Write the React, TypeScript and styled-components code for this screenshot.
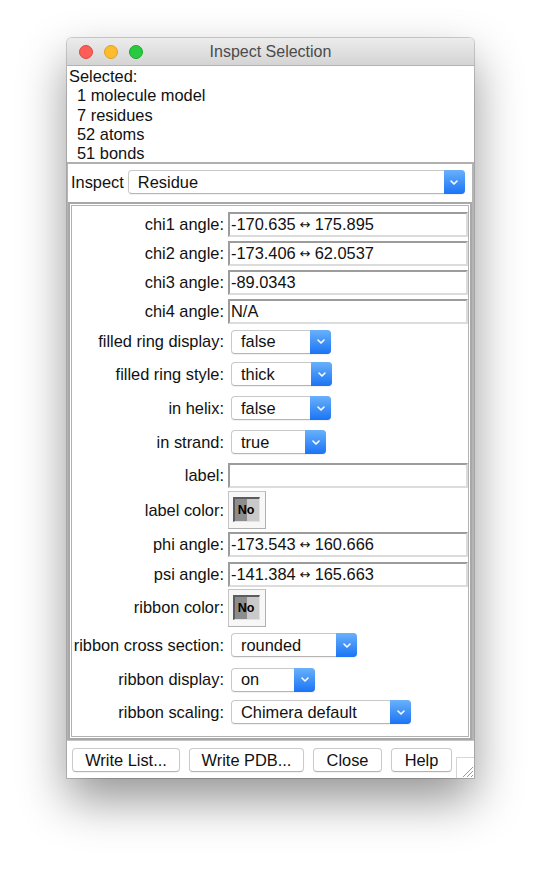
import React from "react";
import styled, { createGlobalStyle } from "styled-components";

const GlobalStyle = createGlobalStyle`
  html, body {
    margin: 0;
    padding: 0;
    background: #ffffff;
  }
  body {
    font-family: "Liberation Sans", Helvetica, Arial, sans-serif;
    font-size: 16.4px;
    color: #111;
  }
`;

const Page = styled.div`
  width: 542px;
  height: 876px;
  padding: 38px 0 0 67px;
  box-sizing: border-box;
`;

const Window = styled.div`
  width: 407px;
  height: 740px;
  display: flex;
  flex-direction: column;
  background: #fff;
  border-radius: 5px 5px 0 0;
  box-shadow: 0 0 0 1px rgba(0, 0, 0, 0.18), 0 22px 48px rgba(0, 0, 0, 0.42);
  overflow: hidden;
`;

const TitleBar = styled.div`
  height: 27px;
  flex: none;
  display: grid;
  grid-template-columns: 1fr auto 1fr;
  align-items: center;
  background: linear-gradient(#ececec, #d4d4d4);
  border-bottom: 1px solid #b3b3b3;
`;

const Lights = styled.div`
  display: flex;
  gap: 11px;
  padding-left: 12px;
`;

const Light = styled.span<{ fill: string; edge: string }>`
  width: 12px;
  height: 12px;
  border-radius: 50%;
  background: ${(p) => p.fill};
  border: 0.5px solid ${(p) => p.edge};
`;

const Title = styled.div`
  color: #4b4b4b;
  font-size: 16px;
`;

const Summary = styled.div`
  height: 96px;
  flex: none;
  padding: 1px 2px 0;
  line-height: 19.3px;
  box-sizing: border-box;
`;

const SummaryLine = styled.div<{ indent?: boolean }>`
  padding-left: ${(p) => (p.indent ? "8px" : "0")};
  white-space: pre;
`;

const LowerFrame = styled.div`
  flex: none;
  border-top: 2px solid #b0b0b0;
  border-left: 1px solid #b4b4b4;
  border-right: 2px solid #b4b4b4;
`;

const InspectRow = styled.div`
  height: 36px;
  display: flex;
  align-items: center;
  gap: 4px;
  padding: 0 3px 0 3px;
`;

const Panel = styled.div`
  margin-top: 2px;
  border: 2px solid #a8a8a8;
  box-shadow: inset 0 0 0 1px #fff, inset 0 0 0 2px #b2b2b2;
  padding: 6px 2px 9px 2px;
`;

const Grid = styled.div`
  display: grid;
  grid-template-columns: 152px 1fr;
  column-gap: 4px;
`;

const Label = styled.div<{ h: number }>`
  height: ${(p) => p.h}px;
  display: flex;
  align-items: center;
  justify-content: flex-end;
  white-space: nowrap;
`;

const Cell = styled.div<{ h: number }>`
  height: ${(p) => p.h}px;
  display: flex;
  align-items: center;
`;

const Entry = styled.div`
  width: 100%;
  height: 25px;
  box-sizing: border-box;
  border-top: 2px solid #9c9c9c;
  border-left: 2px solid #9c9c9c;
  border-right: 2px solid #dcdcdc;
  border-bottom: 2px solid #dcdcdc;
  padding-left: 1px;
  display: flex;
  align-items: center;
  white-space: pre;
  background: #fff;
`;

const Arrow = styled.span`
  font-family: "DejaVu Sans", sans-serif;
  font-size: 13px;
  padding: 0 4px;
`;

const Popup = styled.div<{ w: number; inset?: number }>`
  width: ${(p) => p.w}px;
  height: 24px;
  margin-left: ${(p) => p.inset ?? 3}px;
  box-sizing: border-box;
  display: flex;
  align-items: stretch;
  border: 1px solid #c9c9c9;
  border-bottom-color: #b5b5b5;
  border-radius: 4px;
  background: #fff;
  box-shadow: 0 1px 1px rgba(0, 0, 0, 0.06);
`;

const PopupText = styled.span`
  flex: 1;
  display: flex;
  align-items: center;
  padding-left: 9px;
  white-space: nowrap;
`;

const PopupArrow = styled.span`
  width: 21px;
  margin: -1px -1px -1px 0;
  border-radius: 0 4px 4px 0;
  background: linear-gradient(#69b1fb, #1a74f5);
  display: flex;
  align-items: center;
  justify-content: center;
`;

const ColorWell = styled.div`
  width: 38px;
  height: 38px;
  box-sizing: border-box;
  border: 1px solid #c4c4c4;
  border-right-color: #b0b0b0;
  border-bottom-color: #b0b0b0;
  background: #f7f7f7;
  padding: 5px 5px 6px 4px;
  display: flex;
`;

const Swatch = styled.div`
  flex: 1;
  box-sizing: border-box;
  border-top: 2px solid #5c5c5c;
  border-left: 2px solid #5c5c5c;
  border-right: 1px solid #e2e2e2;
  border-bottom: 1px solid #e2e2e2;
  background: linear-gradient(90deg, #8d8d8d 0 50%, #c9c9c9 50% 100%);
  display: flex;
  align-items: center;
  justify-content: center;
  font-size: 12.5px;
  font-weight: bold;
  color: #000;
  padding-right: 2px;
`;

const ButtonBar = styled.div`
  flex: 1;
  display: flex;
  justify-content: space-between;
  padding-left: 5px;
  border-top: 1px solid #c4c4c4;
  background: #fff;
`;

const Buttons = styled.div`
  display: flex;
  align-items: flex-start;
  gap: 9px;
  padding-top: 7px;
`;

const Button = styled.div<{ w: number }>`
  width: ${(p) => p.w}px;
  flex: none;
  height: 24px;
  box-sizing: border-box;
  border: 1px solid #cacaca;
  border-bottom-color: #b3b3b3;
  border-radius: 4px;
  background: #fff;
  box-shadow: 0 1px 1px rgba(0, 0, 0, 0.05);
  display: flex;
  align-items: center;
  justify-content: center;
  white-space: nowrap;
`;

const Grip = styled.div`
  align-self: flex-end;
  width: 18px;
  height: 21px;
  box-sizing: border-box;
  border-left: 1px solid #d6d6d6;
  border-top: 1px solid #d6d6d6;
  display: flex;
  align-items: flex-end;
  justify-content: flex-end;
`;

const Chevron = () => (
  <svg width="10" height="7" viewBox="0 0 10 7">
    <path d="M2 2 L5 5 L8 2" fill="none" stroke="#fff" strokeWidth="1.6" strokeLinecap="round" strokeLinejoin="round" />
  </svg>
);

const Select: React.FC<{ value: string; width: number; inset?: number }> = ({ value, width, inset }) => (
  <Popup w={width} inset={inset}>
    <PopupText>{value}</PopupText>
    <PopupArrow>
      <Chevron />
    </PopupArrow>
  </Popup>
);

const EntryValue: React.FC<{ value: string }> = ({ value }) => {
  const parts = value.split(" \u2194 ");
  if (parts.length < 2) return <Entry>{value}</Entry>;
  return (
    <Entry>
      {parts[0]}
      <Arrow>{"\u2194"}</Arrow>
      {parts[1]}
    </Entry>
  );
};

type Row =
  | { label: string; kind: "entry"; value: string; h: number }
  | { label: string; kind: "menu"; value: string; width: number; h: number }
  | { label: string; kind: "color"; h: number };

const rows: Row[] = [
  { label: "chi1 angle:", kind: "entry", value: "-170.635 \u2194 175.895", h: 29 },
  { label: "chi2 angle:", kind: "entry", value: "-173.406 \u2194 62.0537", h: 29 },
  { label: "chi3 angle:", kind: "entry", value: "-89.0343", h: 29 },
  { label: "chi4 angle:", kind: "entry", value: "N/A", h: 29 },
  { label: "filled ring display:", kind: "menu", value: "false", width: 100, h: 31 },
  { label: "filled ring style:", kind: "menu", value: "thick", width: 101, h: 34 },
  { label: "in helix:", kind: "menu", value: "false", width: 100, h: 34 },
  { label: "in strand:", kind: "menu", value: "true", width: 95, h: 34 },
  { label: "label:", kind: "entry", value: "", h: 32 },
  { label: "label color:", kind: "color", h: 38 },
  { label: "phi angle:", kind: "entry", value: "-173.543 \u2194 160.666", h: 31 },
  { label: "psi angle:", kind: "entry", value: "-141.384 \u2194 165.663", h: 29 },
  { label: "ribbon color:", kind: "color", h: 37 },
  { label: "ribbon cross section:", kind: "menu", value: "rounded", width: 126, h: 38 },
  { label: "ribbon display:", kind: "menu", value: "on", width: 84, h: 31 },
  { label: "ribbon scaling:", kind: "menu", value: "Chimera default", width: 180, h: 34 },
];

const App: React.FC = () => (
  <>
    <GlobalStyle />
    <Page>
      <Window>
        <TitleBar>
          <Lights>
            <Light fill="#fc5f57" edge="#de4840" />
            <Light fill="#fdbc2e" edge="#dea123" />
            <Light fill="#29c940" edge="#1aab29" />
          </Lights>
          <Title>Inspect Selection</Title>
          <div />
        </TitleBar>
        <Summary>
          <SummaryLine>Selected:</SummaryLine>
          <SummaryLine indent>1 molecule model</SummaryLine>
          <SummaryLine indent>7 residues</SummaryLine>
          <SummaryLine indent>52 atoms</SummaryLine>
          <SummaryLine indent>51 bonds</SummaryLine>
        </Summary>
        <LowerFrame>
          <InspectRow>
            <span>Inspect</span>
            <Select value="Residue" width={337} inset={0} />
          </InspectRow>
          <Panel>
            <Grid>
              {rows.map((r) => (
                <React.Fragment key={r.label}>
                  <Label h={r.h}>{r.label}</Label>
                  <Cell h={r.h}>
                    {r.kind === "entry" && <EntryValue value={r.value} />}
                    {r.kind === "menu" && <Select value={r.value} width={r.width} />}
                    {r.kind === "color" && (
                      <ColorWell>
                        <Swatch>No</Swatch>
                      </ColorWell>
                    )}
                  </Cell>
                </React.Fragment>
              ))}
            </Grid>
          </Panel>
        </LowerFrame>
        <ButtonBar>
          <Buttons>
            <Button w={108}>Write List...</Button>
            <Button w={115}>Write PDB...</Button>
            <Button w={69}>Close</Button>
            <Button w={61}>Help</Button>
          </Buttons>
          <Grip>
            <svg width="14" height="14" viewBox="0 0 14 14">
              <path d="M3 13 L13 3 M7 13 L13 7 M11 13 L13 11" stroke="#9a9a9a" strokeWidth="1" />
            </svg>
          </Grip>
        </ButtonBar>
      </Window>
    </Page>
  </>
);

export default App;
